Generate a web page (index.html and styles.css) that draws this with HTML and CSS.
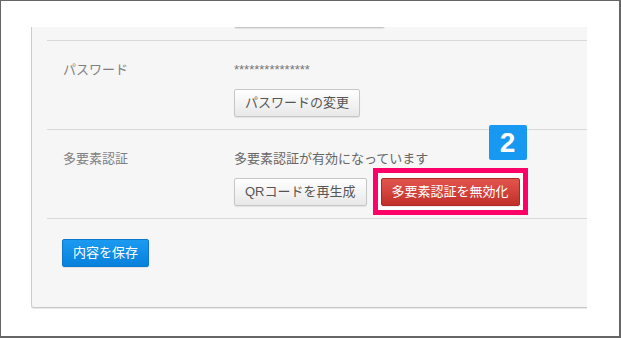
FILE: index.html
```html
<!DOCTYPE html>
<html lang="ja">
<head>
    <meta charset="UTF-8">
    <meta name="viewport" content="width=device-width, initial-scale=1.0">
    <title>アカウント設定</title>
    <link rel="stylesheet" href="styles.css">
</head>
<body>

    <div class="frame">
        <div class="panel">
            <!-- bottom edge of the button scrolled out of view -->
            <div class="row-clip">
                <button class="btn btn-clipped" aria-hidden="true"></button>
            </div>

            <div class="field">
                <div class="field-label">パスワード</div>
                <div class="field-value">
                    <div class="masked">***************</div>
                    <div class="actions">
                        <button class="btn">パスワードの変更</button>
                    </div>
                </div>
            </div>

            <div class="field">
                <div class="field-label">多要素認証</div>
                <div class="field-value">
                    <div>多要素認証が有効になっています</div>
                    <div class="actions">
                        <button class="btn">QRコードを再生成</button>
                        <span class="highlight">
                            <span class="badge">2</span>
                            <button class="btn btn-danger">多要素認証を無効化</button>
                        </span>
                    </div>
                </div>
            </div>

            <div class="form-footer">
                <button class="btn btn-primary">内容を保存</button>
            </div>
        </div>
    </div>

</body>
</html>
```

FILE: styles.css
```css
body {
    margin: 0;
    font-family: "Liberation Sans", "Noto Sans CJK JP", sans-serif;
    font-size: 13px;
    color: #666;
}

.frame {
    width: 621px;
    height: 338px;
    box-sizing: border-box;
    border: 1px solid #666;
    border-right-width: 2px;
    border-bottom-width: 2px;
    padding: 26px 0 0 30px;
    background: #fff;
    overflow: hidden;
}

.panel {
    width: 556px;
    box-sizing: border-box;
    background: #f6f6f6;
    border-left: 1px solid #ccc;
    border-bottom: 1px solid #c9c9c9;
    border-bottom-left-radius: 3px;
    box-shadow: 0 1px 0 #e8e8e8;
    padding: 0 0 40px 15px;
    overflow: hidden;
}

.row-clip {
    display: flex;
    height: 13px;
    padding-left: 187px;
}

.btn-clipped {
    width: 151px;
    margin-top: -27px;
}

.field {
    display: flex;
    border-top: 1px solid #d9d9d9;
    padding: 19px 0 12px;
    line-height: 20px;
}

.field-label {
    width: 171px;
    padding-left: 16px;
    color: #808080;
}

.masked {
    color: #777;
}

.actions {
    display: flex;
    gap: 14px;
    margin-top: 9px;
}

.btn {
    height: 28px;
    box-sizing: border-box;
    padding: 0 10px;
    font-family: inherit;
    font-size: 13px;
    line-height: 26px;
    color: #555;
    background: linear-gradient(#ffffff, #e8e8e8);
    border: 1px solid #c6c6c6;
    border-radius: 2px;
    box-shadow: 0 1px 1px rgba(0, 0, 0, 0.08);
    white-space: nowrap;
    cursor: pointer;
}

.btn-danger {
    color: #fff;
    background: linear-gradient(#e2554d, #c1302a);
    border-color: #ae2924;
}

.btn-primary {
    color: #fff;
    background: linear-gradient(#1c9af0, #0781dc);
    border-color: #0a78cf;
}

.highlight {
    position: relative;
    z-index: 0;
    display: inline-flex;
}

.highlight::before {
    content: "";
    position: absolute;
    top: -10px;
    bottom: -9px;
    left: -8px;
    right: -8px;
    border: 5px solid #ff0068;
    background: #fff;
    z-index: -1;
}

.badge {
    position: absolute;
    top: -53px;
    right: -7px;
    width: 38px;
    height: 35px;
    border-radius: 2px;
    background: #1799f1;
    color: #fff;
    font-size: 28px;
    font-weight: bold;
    line-height: 35px;
    text-align: center;
}

.form-footer {
    border-top: 1px solid #d9d9d9;
    padding: 20px 0 0 15px;
}
```
